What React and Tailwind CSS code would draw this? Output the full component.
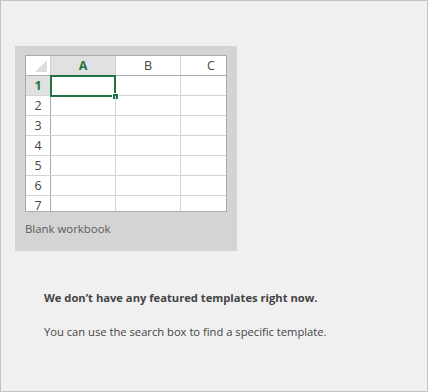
import React from 'react';

const rows = [1, 2, 3, 4, 5, 6, 7];

function Sheet() {
  return (
    <div className="w-[202px] h-[157px] border border-[#ababab] bg-white overflow-hidden">
      {/* header row */}
      <div className="flex h-[20px] border-b border-[#ababab] text-[12.5px] leading-[19px]">
        <div className="relative w-[25px] shrink-0 border-r border-[#d4d4d4]">
          <div className="absolute right-[3px] bottom-[3px] w-0 h-0 border-l-[12px] border-l-transparent border-b-[12px] border-b-[#dcdcdc]" />
        </div>
        <div className="w-[65px] shrink-0 bg-[#e1e1e1] border-r border-[#d4d4d4] text-center font-bold text-[#217346]">A</div>
        <div className="w-[65px] shrink-0 border-r border-[#d4d4d4] text-center text-[#444]">B</div>
        <div className="flex-1 pl-[26px] text-[#444]">C</div>
      </div>
      {rows.map((n) => (
        <div key={n} className="flex h-[20px] shrink-0 border-b border-[#d4d4d4] text-[12.5px] leading-[20px]">
          <div
            className={
              n === 1
                ? 'w-[25px] shrink-0 border-r border-[#ababab] bg-[#e1e1e1] text-center font-bold text-[#217346]'
                : 'w-[25px] shrink-0 border-r border-[#ababab] text-center text-[#444]'
            }
          >
            {n}
          </div>
          <div className="relative w-[65px] shrink-0 border-r border-[#d4d4d4]">
            {n === 1 && (
              <>
                <div className="absolute -left-[1px] -top-[1px] w-[66px] h-[22px] border-2 border-[#217346]" />
                <div className="absolute left-[61px] top-[17px] w-[5px] h-[5px] bg-[#217346] border border-white box-content" />
              </>
            )}
          </div>
          <div className="w-[65px] shrink-0 border-r border-[#d4d4d4]" />
          <div className="flex-1" />
        </div>
      ))}
    </div>
  );
}

export default function App() {
  return (
    <div
      className="w-[428px] h-[392px] border border-[#c3c3c3] bg-[#f0f0f0] overflow-hidden"
      style={{ fontFamily: '"Open Sans", "Noto Sans", sans-serif' }}
    >
      <div className="ml-[14px] mt-[45px] w-[222px] h-[205px] bg-[#d4d4d4] pt-[9px] pl-[10px]">
        <Sheet />
        <div className="mt-[9px] text-[11.4px] leading-[16px] text-[#5c5c5c]">Blank workbook</div>
      </div>
      <div className="ml-[43px] mt-[39px] text-[11.2px] text-[#444]">
        <div className="font-bold leading-[16px]">We don’t have any featured templates right now.</div>
        <div className="mt-[18px] leading-[16px]">You can use the search box to find a specific template.</div>
      </div>
    </div>
  );
}
